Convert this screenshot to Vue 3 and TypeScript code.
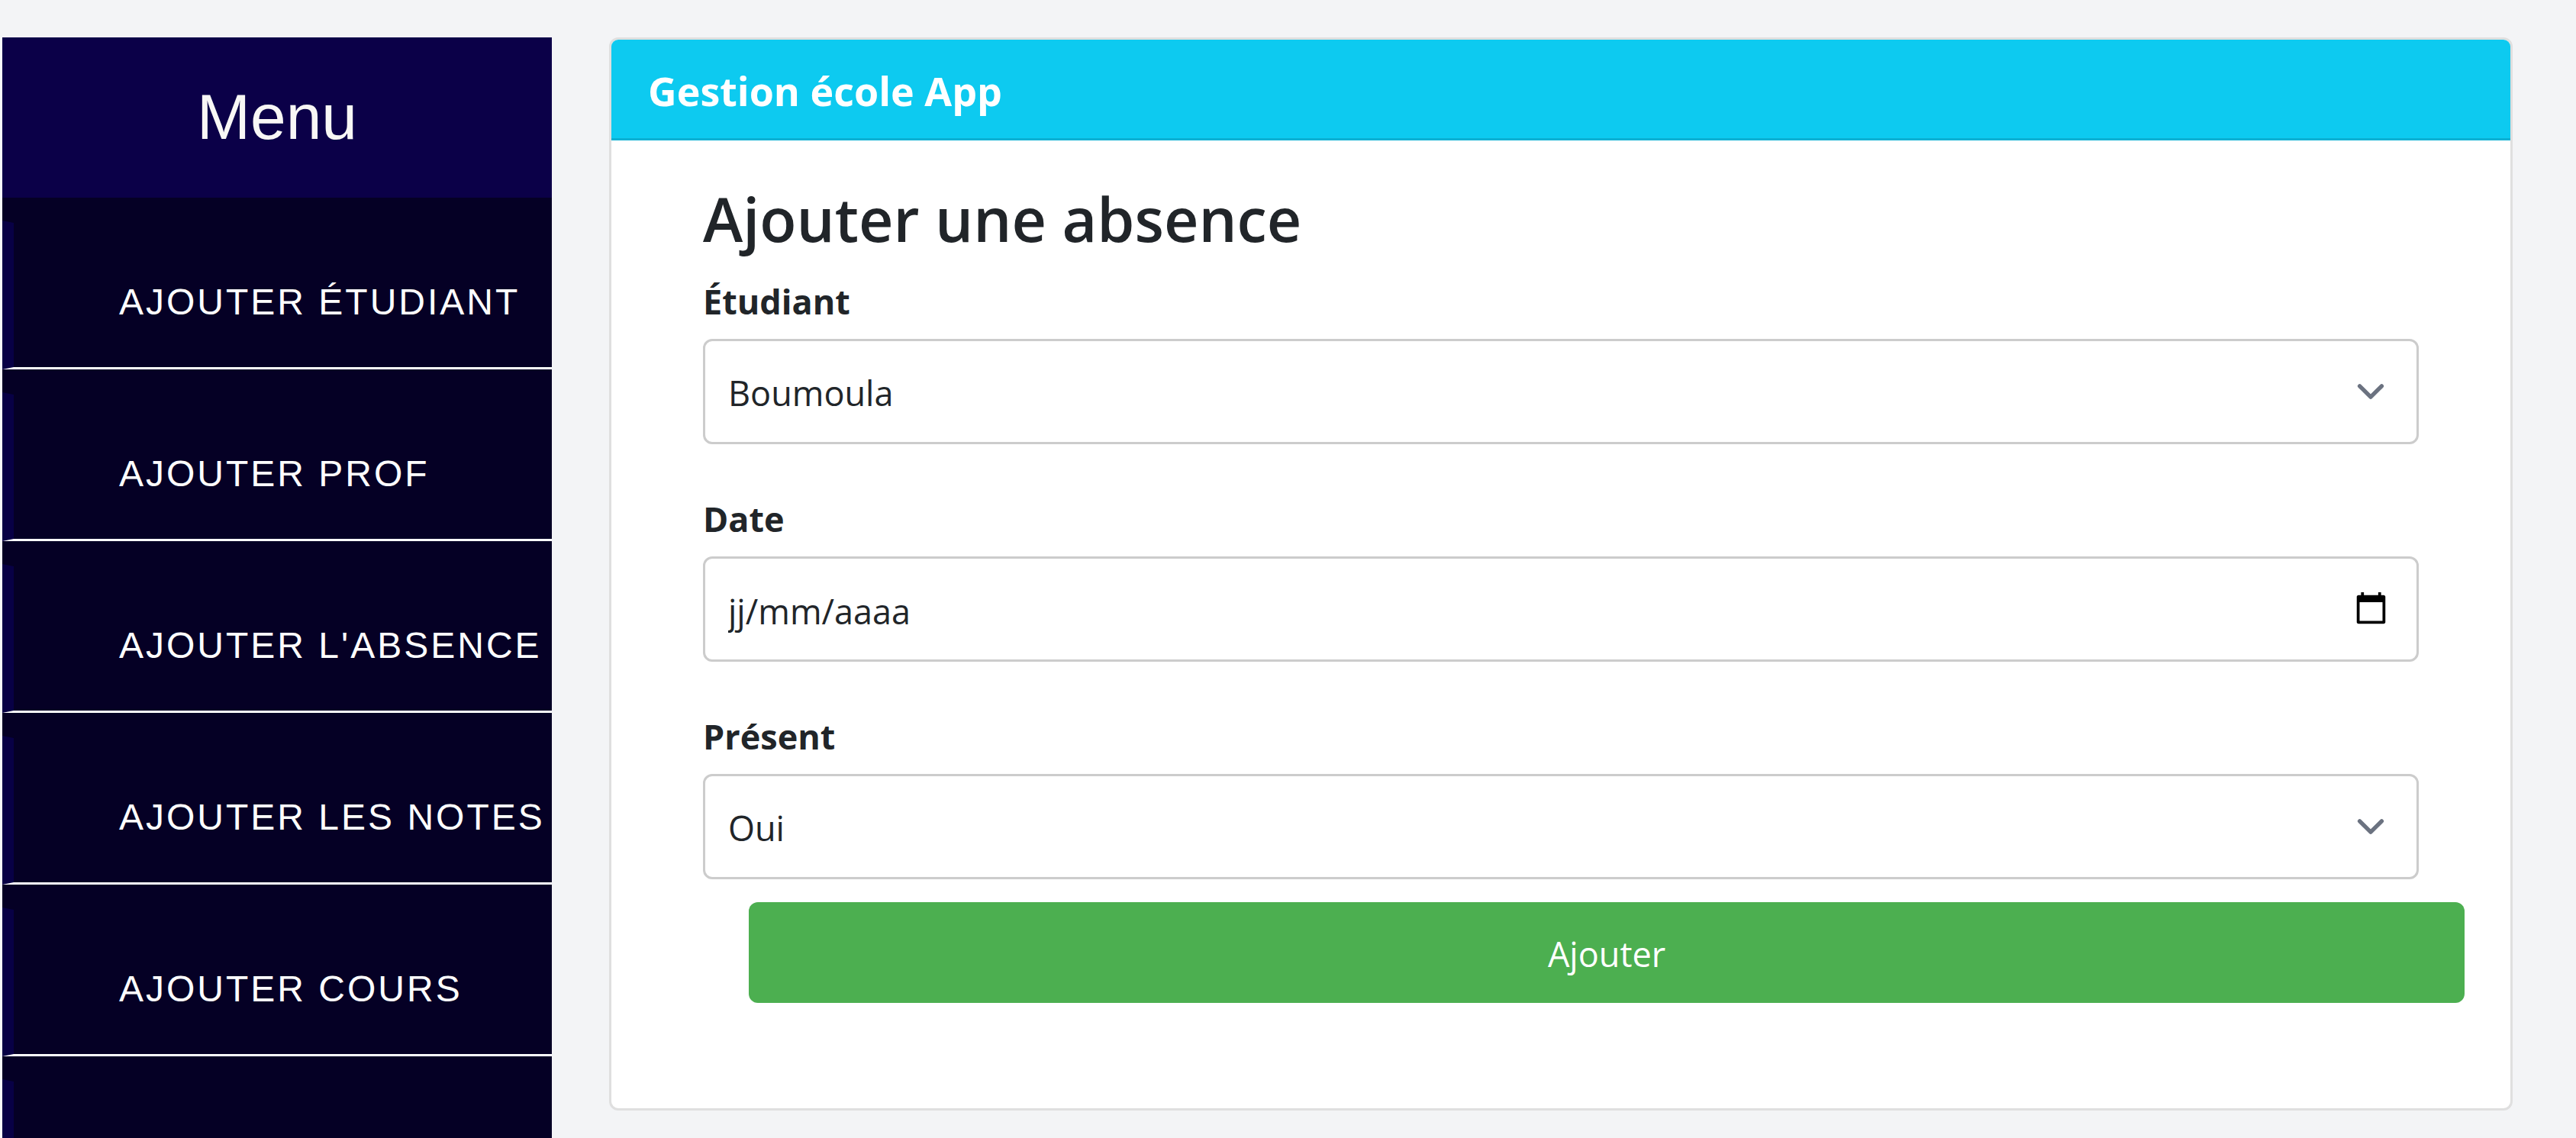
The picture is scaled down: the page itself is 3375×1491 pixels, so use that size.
<script setup lang="ts">
import { ref } from 'vue'

const menuItems: string[] = [
  'Ajouter étudiant',
  'Ajouter prof',
  "Ajouter l'absence",
  'Ajouter les notes',
  'Ajouter cours',
]

const students: string[] = ['Boumoula']
const presence: string[] = ['Oui', 'Non']

const student = ref(students[0])
const date = ref('')
const present = ref(presence[0])
</script>

<template>
  <div class="page">
    <nav class="sidebar" aria-label="Menu">
      <header class="sidebar-title">Menu</header>
      <ul class="menu">
        <li v-for="item in menuItems" :key="item">
          <a class="menu-link" href="#">{{ item }}</a>
        </li>
        <li aria-hidden="true"><span class="menu-link"></span></li>
      </ul>
    </nav>

    <main class="content">
      <section class="card">
        <header class="card-header">Gestion école App</header>
        <form class="card-body" @submit.prevent>
          <h2 class="title">Ajouter une absence</h2>

          <div class="field">
            <label for="student">Étudiant</label>
            <div class="control">
              <select id="student" v-model="student">
                <option v-for="s in students" :key="s">{{ s }}</option>
              </select>
              <svg class="chevron" viewBox="0 0 20 20" fill="none" aria-hidden="true">
                <path d="M6 8l4 4 4-4" stroke="#6b7280" stroke-width="1.5" stroke-linecap="round" stroke-linejoin="round" />
              </svg>
            </div>
          </div>

          <div class="field">
            <label for="date">Date</label>
            <div class="control">
              <input id="date" v-model="date" type="text" inputmode="numeric" placeholder="jj/mm/aaaa" />
              <button class="picker" type="button" aria-label="Ouvrir le calendrier">
                <svg viewBox="0 0 24 24" aria-hidden="true">
                  <path d="M20.800 3H19V1h-2v2H7V1H5v2H3.200C2.500 3 2 3.500 2 4.200v17.600c0 .7.500 1.200 1.200 1.200h17.600c.7 0 1.200-.5 1.200-1.200V4.200c0-.7-.5-1.200-1.200-1.200zM20 21H4V8h16v13z" />
                </svg>
              </button>
            </div>
          </div>

          <div class="field">
            <label for="present">Présent</label>
            <div class="control">
              <select id="present" v-model="present">
                <option v-for="p in presence" :key="p">{{ p }}</option>
              </select>
              <svg class="chevron" viewBox="0 0 20 20" fill="none" aria-hidden="true">
                <path d="M6 8l4 4 4-4" stroke="#6b7280" stroke-width="1.5" stroke-linecap="round" stroke-linejoin="round" />
              </svg>
            </div>
          </div>

          <button class="submit" type="submit">Ajouter</button>
        </form>
      </section>
    </main>
  </div>
</template>

<style>
body {
  background: #f3f4f6;
}
</style>

<style scoped>
.page {
  box-sizing: border-box;
  display: flex;
  height: 100vh;
  padding-top: 49px;
  overflow: hidden;
  background: #f3f4f6;
  color: #212529;
  font-family: "Open Sans", "Noto Sans", sans-serif;
  font-size: 45px;
  line-height: 72px;
}

.sidebar {
  flex: none;
  box-sizing: border-box;
  width: 723px;
  overflow: hidden;
  border-left: 3px solid #f9fafb;
  background: #050025;
  font-family: "Liberation Sans", Arial, sans-serif;
}

.sidebar-title {
  padding-bottom: 2px;
  background: #0b0048;
  color: #f8f7f5;
  font-size: 84px;
  line-height: 208px;
  text-align: center;
}

.menu {
  margin: 0;
  padding: 0;
  list-style: none;
}

.menu-link {
  box-sizing: border-box;
  display: block;
  height: 195px;
  margin-top: 30px;
  padding: 68px 0 0 138px;
  border-style: solid;
  border-width: 3px 0 3px 15px;
  border-color: #050025 #050025 #fff #080045;
  color: #fff;
  font-size: 48px;
  letter-spacing: 3px;
  text-decoration: none;
  text-transform: uppercase;
  white-space: nowrap;
}

.content {
  flex: 1;
  min-width: 0;
  padding: 0 83px 0 75px;
}

.card {
  border: 3px solid #dfdfdf;
  border-radius: 12px;
  background: #fff;
  overflow: hidden;
}

.card-header {
  padding: 26px 48px 22px;
  border-bottom: 3px solid #0cb0d3;
  background: #0dcaf0;
  color: #fff;
  font-size: 52px;
  font-weight: 700;
  line-height: 81px;
}

.card-body {
  padding: 52px 120px 138px;
}

.title {
  margin: 0 0 19px;
  font-size: 79px;
  font-weight: 600;
  line-height: 102px;
}

.field {
  margin-bottom: 60px;
}

.field label {
  display: block;
  margin-bottom: 12px;
  font-weight: 700;
  line-height: 75px;
}

.control {
  position: relative;
}

.control select,
.control input {
  box-sizing: border-box;
  display: block;
  width: 100%;
  height: 138px;
  margin: 0;
  padding: 4px 30px 0;
  border: 3px solid #ccc;
  border-radius: 12px;
  outline: none;
  appearance: none;
  background: #fff;
  color: #212529;
  font: inherit;
}

.control input::placeholder {
  color: #212529;
  opacity: 1;
}

.chevron {
  position: absolute;
  top: 33px;
  right: 27px;
  width: 72px;
  height: 72px;
  pointer-events: none;
}

.picker {
  position: absolute;
  top: 45px;
  right: 40px;
  width: 45px;
  height: 45px;
  padding: 0;
  border: 0;
  background: none;
}

.picker svg {
  display: block;
  width: 100%;
  height: 100%;
}

.submit {
  display: block;
  width: 100%;
  height: 132px;
  margin: -30px 0 0 60px;
  padding: 4px 0 0;
  border: 0;
  border-radius: 12px;
  background: #4caf50;
  color: #fff;
  font: inherit;
}
</style>
